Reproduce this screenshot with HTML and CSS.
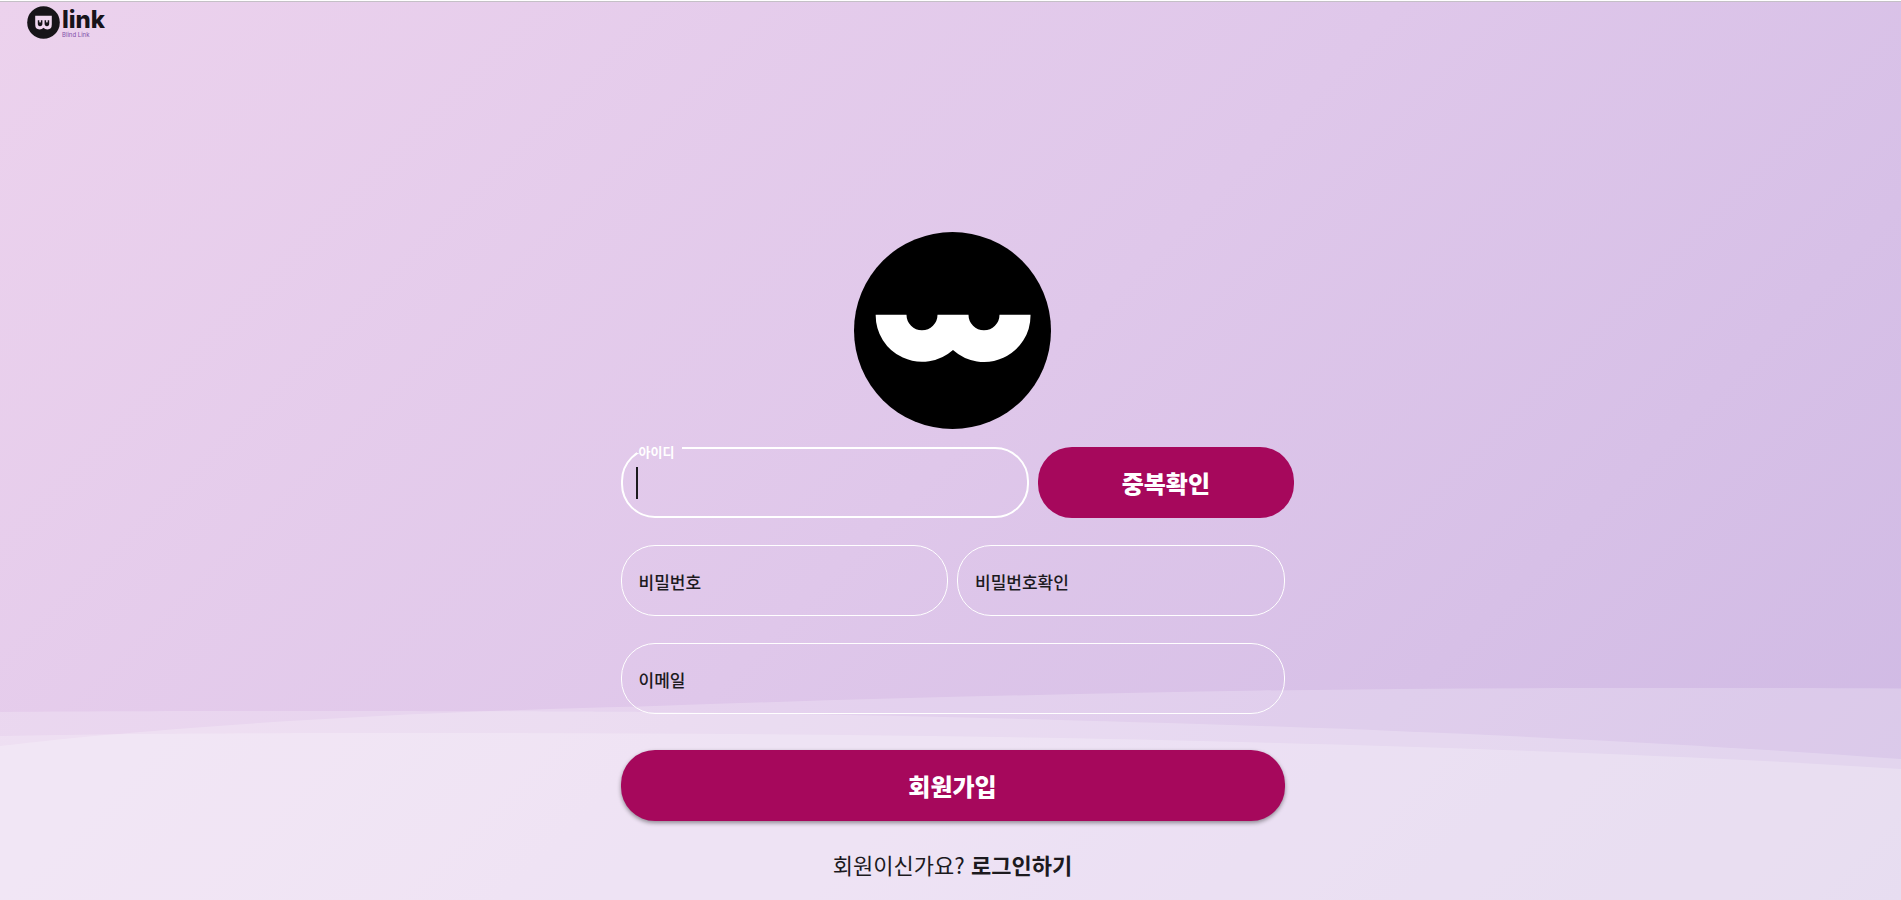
FILE: index.html
```html
<!DOCTYPE html>
<html lang="ko">
<head>
<meta charset="utf-8">
<meta name="viewport" content="width=device-width, initial-scale=1">
<title>Blink</title>
<link rel="stylesheet" href="styles.css">
</head>
<body>
<div class="page">
  <svg class="waves" viewBox="0 0 1901 212" preserveAspectRatio="none" aria-hidden="true">
    <path d="M0 24C120 23 200 23 300 23C500 23 640 24 640 24C860 26 1050 31 1261 38C1500 46 1720 58 1901 71V212H0Z"/>
    <path d="M0 58C170 38 400 24 640 18.500C850 11 1050 6 1261 2.500C1480 -.500 1700 -.500 1901 .500V212H0Z"/>
    <path d="M0 48C130 45 300 45 408 45C700 45 1000 47 1261 54.500C1500 61 1720 69 1901 81V212H0Z"/>
  </svg>

  <header class="header">
    <a class="brand" href="#" aria-label="Blink 홈">
      <svg class="brand-mark" viewBox="0 0 33 33" aria-hidden="true">
        <circle cx="16.500" cy="16.500" r="16.300" fill="#171419"/>
        <path fill="#f0d7f0" fill-rule="evenodd" d="M8.200 9.800H24.800V18.500Q24.800 23.400 20.500 23.400Q17.800 23.400 16.500 21.800Q15.200 23.400 12.500 23.400Q8.200 23.400 8.200 18.500ZM10.800 14.200V17.500Q10.800 20.300 13 20.300Q15.400 20.300 15.400 17.500V14.200H13.900V16Q13.100 17 12.300 16V14.200ZM17.600 14.200V17.500Q17.600 20.300 20 20.300Q22.200 20.300 22.200 17.500V14.200H20.700V16Q19.900 17 19.100 16V14.200Z"/>
      </svg>
      <span class="brand-text">
        <span class="brand-name">link</span>
        <span class="brand-sub">Blind Link</span>
      </span>
    </a>
  </header>

  <main class="main">
    <form class="form">
      <svg class="face" viewBox="0 0 197 197" aria-hidden="true">
        <circle cx="98.500" cy="98.500" r="98.500"/>
        <path fill="#fff" d="M21.700 82.700H52.500A15.500 15.500 0 0 0 83.500 82.700H114.500A15.500 15.500 0 0 0 145.500 82.700H176.500A46.400 46.400 0 0 1 99 118A46.400 46.400 0 0 1 21.700 82.700Z"/>
      </svg>

      <div class="row row-id">
        <div class="field field-active">
          <label for="user-id">아이디</label>
          <input id="user-id" type="text">
          <fieldset class="outline" aria-hidden="true"><legend></legend></fieldset>
          <span class="caret"></span>
        </div>
        <button class="button" type="button">중복확인</button>
      </div>

      <div class="row">
        <div class="field">
          <label for="password">비밀번호</label>
          <input id="password" type="password">
        </div>
        <div class="field">
          <label for="password-check">비밀번호확인</label>
          <input id="password-check" type="password">
        </div>
      </div>

      <div class="row">
        <div class="field">
          <label for="email">이메일</label>
          <input id="email" type="email">
        </div>
      </div>

      <button class="button button-submit" type="submit">회원가입</button>
      <p class="login">회원이신가요? <a href="#">로그인하기</a></p>
    </form>
  </main>
</div>
</body>
</html>
```
FILE: styles.css
```css
* {
  box-sizing: border-box;
}

body {
  margin: 0;
  padding-top: 1px;
  background: #fff;
  color: #1c1a1e;
  font-family: "Noto Sans CJK KR", sans-serif;
}

.page {
  position: relative;
  display: flex;
  flex-direction: column;
  min-height: calc(100vh - 1px);
  border-top: 1px solid #c4c0c6;
  background: linear-gradient(135deg, #ecd2ed 0%, #dfc7ea 50%, #cfb9e4 100%);
}

.waves {
  position: absolute;
  left: 0;
  bottom: 0;
  width: 100%;
  height: 212px;
  fill: rgba(255, 255, 255, 0.22);
}

.header {
  position: relative;
  padding: 4px 27px;
}

.brand {
  display: inline-flex;
  gap: 2px;
  color: #171419;
  text-decoration: none;
}

.brand-mark {
  width: 33px;
  height: 33px;
}

.brand-text {
  display: flex;
  flex-direction: column;
  font-family: Inter, sans-serif;
}

.brand-name {
  font-size: 24px;
  font-weight: 800;
  line-height: 27px;
}

.brand-sub {
  color: #7f4fa8;
  font-size: 6px;
  line-height: 3px;
}

.main {
  position: relative;
  display: flex;
  flex: 1;
  flex-direction: column;
  justify-content: flex-end;
  align-items: center;
  padding: 0 0 20px 4px;
}

.form {
  display: flex;
  flex-direction: column;
  width: 100%;
  max-width: 664px;
}

.face {
  align-self: center;
  width: 197px;
  height: 197px;
  margin-bottom: 18px;
}

.row {
  display: flex;
  gap: 9px;
  margin-bottom: 27px;
}

.row-id {
  margin-right: -9px;
}

.row-id .field {
  flex: 8;
}

.row-id .button {
  flex: 5;
}

.field {
  position: relative;
  flex: 1;
}

.field label {
  position: absolute;
  top: 25px;
  left: 18px;
  font-size: 17px;
  font-weight: 500;
  line-height: 24px;
}

.field input {
  display: block;
  width: 100%;
  height: 71px;
  padding: 0 16px;
  border: 1px solid #fff;
  border-radius: 34px;
  outline: 0;
  background: transparent;
  color: inherit;
  font: inherit;
  font-size: 24px;
}

.field-active label {
  top: -3px;
  color: #fff;
  font-size: 13px;
  font-weight: 700;
  line-height: 16px;
}

.field-active input {
  border-color: transparent;
}

.outline {
  position: absolute;
  inset: -5px 0 0;
  min-width: 0;
  margin: 0;
  padding: 0 14px;
  border: 2px solid #fff;
  border-radius: 34px;
  pointer-events: none;
}

.outline legend {
  width: 45px;
  height: 11px;
  padding: 0;
}

.caret {
  position: absolute;
  top: 20px;
  left: 15px;
  width: 2px;
  height: 32px;
  background: #1c1a1e;
}

.button {
  height: 71px;
  padding: 0;
  border: 0;
  border-radius: 34px;
  background: #a6085c;
  color: #fff;
  font-family: inherit;
  font-size: 24px;
  font-weight: 900;
}

.button-submit {
  margin-top: 9px;
  box-shadow: 0 2px 4px rgba(0, 0, 0, 0.4);
}

.login {
  margin: 27px 0 0;
  font-size: 22px;
  line-height: 32px;
  text-align: center;
}

.login a {
  color: inherit;
  font-weight: 700;
  text-decoration: none;
}
```
